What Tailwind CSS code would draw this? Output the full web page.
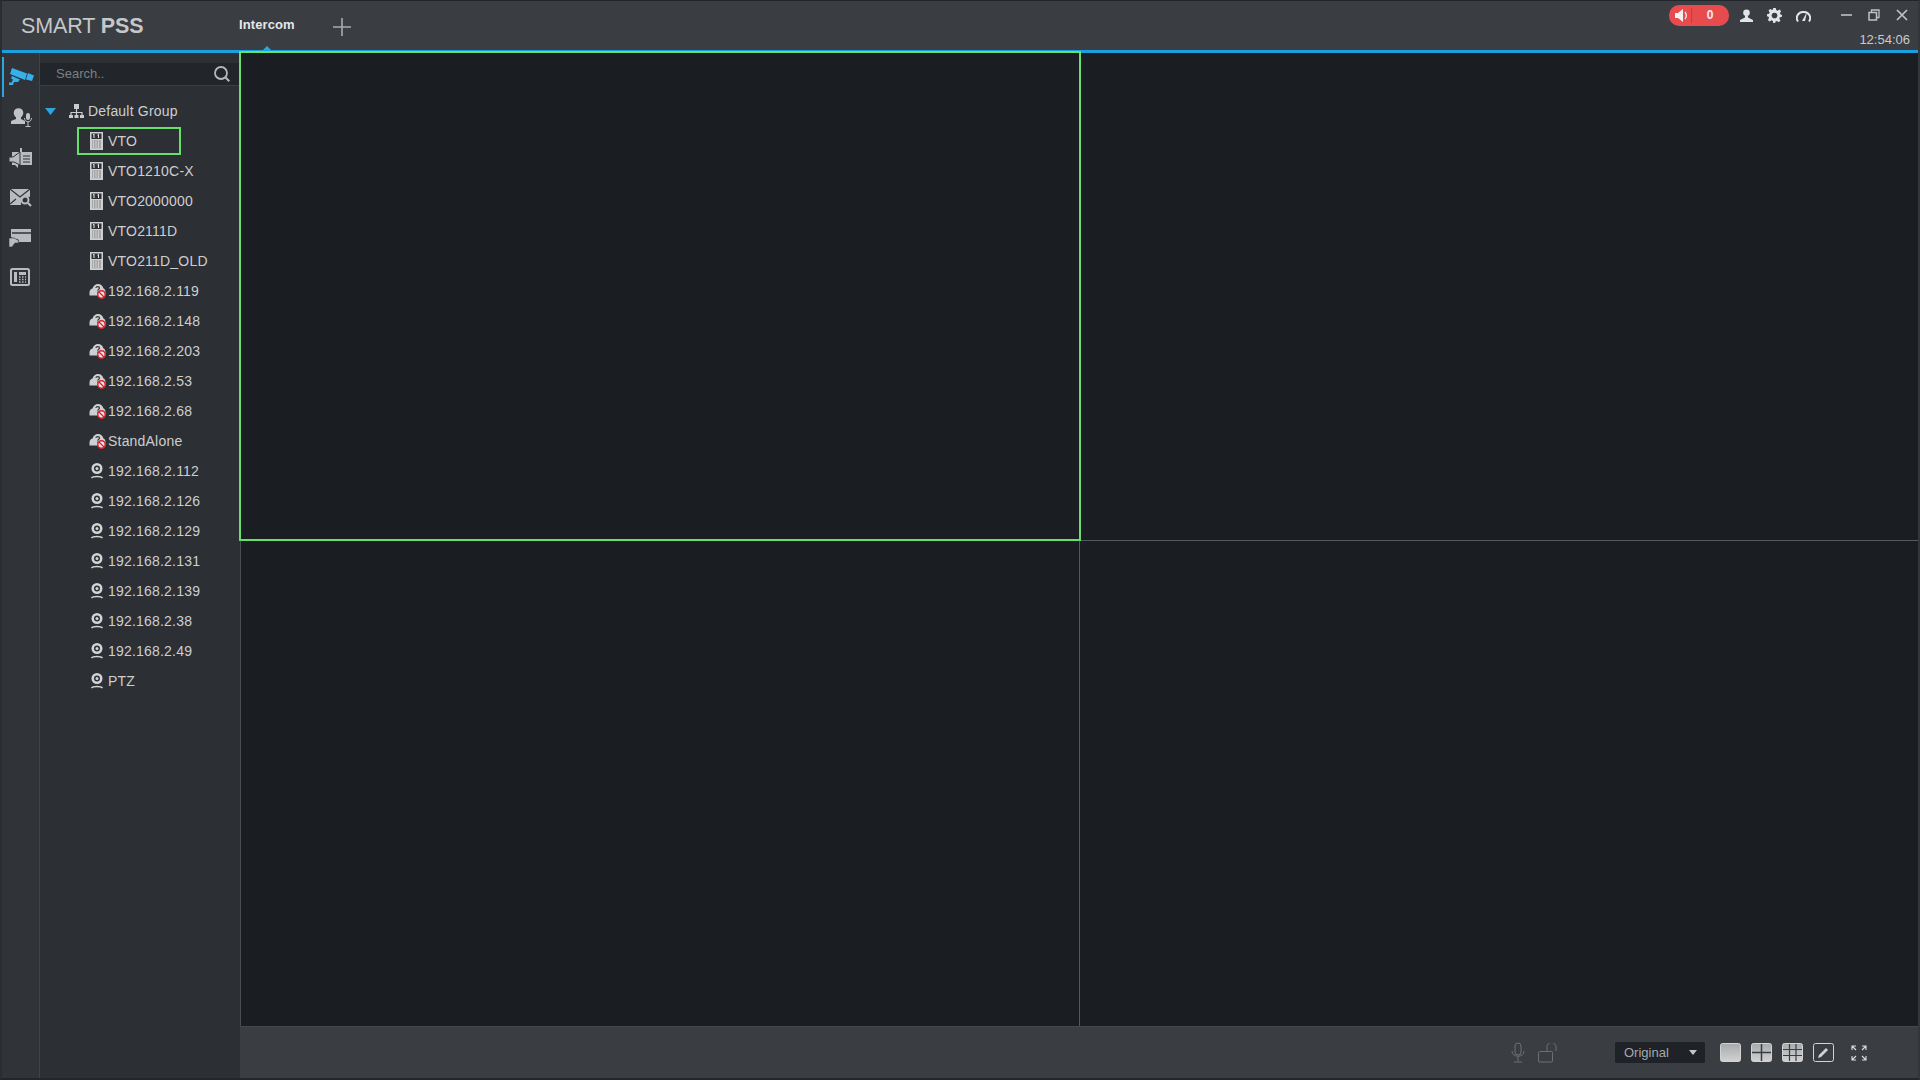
<!DOCTYPE html>
<html><head><meta charset="utf-8"><title>SmartPSS</title>
<script src="https://cdn.jsdelivr.net/npm/@tailwindcss/browser@4"></script></head>
<body class="m-0 bg-[#1b1e22]">
<svg width="0" height="0" class="absolute">
<defs>
<linearGradient id="tile" x1="0" y1="0" x2="0" y2="1"><stop offset="0" stop-color="#a8a9ab"/><stop offset="1" stop-color="#d2d2d3"/></linearGradient>
<symbol id="vto" viewBox="0 0 13 18"><rect width="13" height="18" fill="#cfd0d2"/><rect x="1.500" y="1.500" width="10" height="5.500" fill="#2f3236"/><path d="M3 3l1-.8V6M7.500 3l1-.8V6" stroke="#e8e8e8" stroke-width="1" fill="none"/><rect x="2" y="8.500" width="9" height="8" fill="#85878a"/><path d="M2 10h9M2 12h9M2 14h9M2 16h9M3.500 8.500v8M6 8.500v8M8.500 8.500v8" stroke="#d5d6d8" stroke-width=".8"/></symbol>
<symbol id="off" viewBox="0 0 17 16"><path d="M.5 12.500V9.500C.5 7.500 1.500 6 3.500 5.500 4.500 2.500 6.500 1 9 1c2.800 0 4.800 1.800 5.300 4.300 1.400.6 2.200 2 2.200 4v3.200z" fill="#cfd0d2"/><path d="M6.800 4.800c.4-1.700 3.700-1.700 3.700.2 0 1.300-1.700 1.300-1.700 2.700M8.800 8.500v1.200" stroke="#33363a" stroke-width="1.200" fill="none"/><circle cx="12.500" cy="11.500" r="3.700" fill="#efe6e6" stroke="#d8232f" stroke-width="1.500"/><path d="M10 9l5 5" stroke="#d8232f" stroke-width="1.300"/></symbol>
<symbol id="cam" viewBox="0 0 14 18"><circle cx="7" cy="6.500" r="5.500" fill="#d3d4d6"/><circle cx="7" cy="6.500" r="3" fill="#2c2f33"/><circle cx="7" cy="6.500" r="1.500" fill="#d3d4d6"/><path d="M1.500 16c1.500-2 9.500-2 11 0" stroke="#d3d4d6" stroke-width="1.300" fill="none"/></symbol>
</defs>
</svg>
<div class="w-[1920px] h-[1080px] flex flex-col overflow-hidden bg-[#1b1e22] border-t border-l-2 border-b-2 border-r-2 border-t-[#22252a] border-l-[#2a2d31] border-b-[#22252a] border-r-[#33363a] font-['Liberation_Sans',Arial,sans-serif] text-[#d2d3d5]">

<!-- header -->
<header class="h-[49px] shrink-0 flex items-start bg-[#3a3d42] relative">
  <div class="w-[19px] shrink-0"></div>
  <div class="w-[218px] shrink-0 pt-[13px] text-[21.500px] leading-6 text-[#c5c7c9] whitespace-nowrap tracking-[-0.1px]">SMART <span class="font-bold">PSS</span></div>
  <div class="w-[94px] shrink-0 pt-[16px] text-[13px] tracking-[0.1px] leading-4 font-bold text-[#e6e7e8] relative">Intercom
    <div class="absolute left-[24px] top-[45px] w-0 h-0 border-x-[4px] border-x-transparent border-b-[4px] border-b-[#2ba6df]"></div>
  </div>
  <svg class="mt-[17px]" width="18" height="18" viewBox="0 0 18 18"><path d="M9 0v18M0 9h18" stroke="#a9abae" stroke-width="1.600"/></svg>
  <div class="flex-1"></div>
  <div class="flex flex-col items-end shrink-0">
    <div class="flex items-center pt-[3px] h-[25px] pr-[1px]">
      <div class="w-[60px] h-[21px] rounded-[10px] bg-[#e84b4e] flex items-center">
        <svg class="ml-[6px]" width="14" height="13" viewBox="0 0 14 13"><path d="M0 4h3l5-4v13l-5-4H0z" fill="#f6f1f1"/><path d="M10 3c1.500 2 1.500 5 0 7" stroke="#f6f1f1" stroke-width="1.300" fill="none"/></svg>
        <div class="w-px h-[15px] bg-[#c93a3d] ml-[2px]"></div>
        <div class="flex-1 text-center pr-[1px] text-[12px] font-bold text-[#f8eeee]">0</div>
      </div>
      <svg class="ml-[11px]" width="13" height="13" viewBox="0 0 13 13"><circle cx="6.500" cy="3.800" r="3.300" fill="#e3e4e5"/><path d="M5 6.500h3v2l5 2.500v2H0v-2l5-2.500z" fill="#e3e4e5"/></svg>
      <svg class="ml-[14px]" width="15" height="15" viewBox="0 0 24 24"><path fill="#e3e4e5" d="M10 0h4l.7 3.300 2.300 1L20 2.400 22.600 5l-1.900 2.900 1 2.300L24 11v3l-3.300.7-1 2.300 1.900 2.900-2.700 2.700-2.900-1.900-2.300 1L13 24h-3l-.7-3.300-2.300-1-2.900 1.900L1.400 19l1.900-2.900-1-2.300L0 13v-3l3.300-.7 1-2.300L2.400 4 5 1.400l2.900 1.900 1.400-.9z"/><circle cx="12" cy="12" r="4.500" fill="#3a3d42"/></svg>
      <svg class="ml-[14px]" width="15" height="13" viewBox="0 0 15 13"><path d="M2 12.500A6 6 0 0 1 7.500 3a6 6 0 0 1 5.500 9.500" stroke="#e3e4e5" stroke-width="2" fill="none"/><path d="M6 12l5-9-2 9z" fill="#e3e4e5"/></svg>
      <svg class="ml-[29px]" width="13" height="13" viewBox="0 0 13 13"><path d="M1 6h11" stroke="#c0c2c4" stroke-width="1.600"/></svg>
      <svg class="ml-[15px]" width="12" height="12" viewBox="0 0 12 12"><path d="M3.500 3V1H11v7.500H9" stroke="#c0c2c4" stroke-width="1.300" fill="none"/><rect x="1" y="3.500" width="7.500" height="7.500" stroke="#c0c2c4" stroke-width="1.500" fill="none"/></svg>
      <svg class="ml-[16px] mr-[9px]" width="12" height="12" viewBox="0 0 12 12"><path d="M1 1l10 10M11 1L1 11" stroke="#c0c2c4" stroke-width="1.700"/></svg>
    </div>
    <div class="pt-[6px] pr-[8px] text-[13px] leading-4 text-[#c9cbcd]">12:54:06</div>
  </div>
</header>
<div class="h-[3px] shrink-0 bg-[#1a9fe0]"></div>

<div class="flex-1 flex min-h-0">
  <!-- rail -->
  <nav class="w-[38px] shrink-0 bg-[#303337] border-r border-[#3f4246] flex flex-col items-center relative pt-[14px]">
    <div class="absolute left-0 top-[4px] w-[2px] h-[40px] bg-[#2ba6df]"></div>
    <svg class="ml-[2px]" width="25" height="20" viewBox="0 0 25 20"><path d="M3 1l15 5.500-2 6.500L1 7z" fill="#35b0ea"/><path d="M19 6l6 2.500-2 5.500-6-1.500z" fill="#35b0ea"/><path d="M3 9l8 3.500-2 2.500H5l-1 3H0v-2.500h2.500l1.500-3-2-1z" fill="#35b0ea"/></svg>
    <svg class="mt-[21px] ml-[2px]" width="22" height="20" viewBox="0 0 22 20"><circle cx="7.500" cy="5" r="4.800" fill="#c0c2c5"/><path d="M5 9h5v2l4 2v3H0v-3l5-2z" fill="#c0c2c5"/><rect x="15" y="5" width="4" height="7" rx="2" fill="#c0c2c5"/><path d="M13.500 10c0 5 7 5 7 0M17 14v4M14.500 18.500h5" stroke="#c0c2c5" stroke-width="1" fill="none"/></svg>
    <svg class="mt-[20px]" width="23" height="21" viewBox="0 0 23 21"><path d="M3 4h20v13H9v3l-3-3H3z" fill="#b9bbbe"/><path d="M0 9h4l7-5v13l-6-3H0z" fill="#b9bbbe" stroke="#303337"/><path d="M14 8h7M14 11h7M14 14h7" stroke="#303337" stroke-width="1.200"/><path d="M12 0v4" stroke="#b9bbbe" stroke-width="2"/></svg>
    <svg class="mt-[19px]" width="22" height="19" viewBox="0 0 22 19"><path d="M0 1h20v8a7 7 0 0 0-9 8H0z" fill="#b9bbbe"/><path d="M0 1l10 8 10-8M0 16l6-5" stroke="#303337" stroke-width="1.200" fill="none"/><circle cx="15" cy="12" r="3.500" stroke="#b9bbbe" stroke-width="2" fill="none"/><path d="M18 15l3 3" stroke="#b9bbbe" stroke-width="2.200"/></svg>
    <svg class="mt-[22px] -ml-[1px]" width="22" height="18" viewBox="0 0 22 18"><path d="M2 0h20v13H10l-1-3H5L2 8z" fill="#b9bbbe"/><path d="M3 4h19" stroke="#303337" stroke-width="1.500"/><path d="M0 9h5l4 2 1 3-4 0-3 4H0z" fill="#b9bbbe" stroke="#303337" stroke-width=".6"/></svg>
    <svg class="mt-[21px] -ml-[1px]" width="20" height="18" viewBox="0 0 20 18"><rect x="1" y="1" width="18" height="16" rx="1.500" stroke="#b9bbbe" stroke-width="2" fill="none"/><rect x="4" y="4" width="3" height="10" fill="#b9bbbe"/><rect x="9" y="4" width="7" height="3" fill="#b9bbbe"/><path d="M9 9h1.500M12 9h1.500M15 9h1M9 11.500h1.500M12 11.500h1.500M15 11.500h1M9 14h1.500M12 14h1.500M15 14h1" stroke="#b9bbbe" stroke-width="1.400"/></svg>
  </nav>

  <!-- tree panel -->
  <aside class="w-[200px] shrink-0 bg-[#2c2f33] flex flex-col text-[14px] tracking-[0.2px] leading-5 text-[#cdced0]">
    <div class="mt-[10px] mr-[1px] h-[23px] shrink-0 bg-[#222529] border-b border-[#3a3d41] flex items-center pl-[16px] pr-[8px] justify-between">
      <span class="text-[13px] tracking-normal text-[#7d8083]">Search..</span>
      <svg width="17" height="17" viewBox="0 0 17 17"><circle cx="7" cy="7" r="6" stroke="#b5b7b9" stroke-width="1.800" fill="none"/><path d="M11.300 11.300l4 4" stroke="#b5b7b9" stroke-width="2"/></svg>
    </div>
    <ul class="pt-[15px]">
      <li class="h-[20px] flex items-center pl-[5px]">
        <svg width="11" height="7" viewBox="0 0 11 7"><path d="M0 0h11L5.500 7z" fill="#2ba6df"/></svg>
        <svg class="ml-[13px]" width="15" height="14" viewBox="0 0 15 14"><rect x="5" y="0" width="5" height="5" fill="#c9cbcd"/><path d="M7.500 5v3M2 12V8.500h11V12M7.500 8v4" stroke="#c9cbcd" stroke-width="1.200" fill="none"/><rect x="0" y="11" width="4" height="3" fill="#c9cbcd"/><rect x="5.500" y="11" width="4" height="3" fill="#c9cbcd"/><rect x="11" y="11" width="4" height="3" fill="#c9cbcd"/></svg>
        <span class="ml-[4px]">Default Group</span>
      </li>
      <li class="h-[28px] mt-[6px] ml-[37px] w-[104px] border-2 border-[#66df6d] flex items-center pl-[11px]"><svg width="13" height="18"><use href="#vto"/></svg><span class="ml-[5px]">VTO</span></li>
      <li class="h-[30px] mt-[1px] ml-[50px] flex items-center"><svg width="13" height="18"><use href="#vto"/></svg><span class="ml-[5px]">VTO1210C-X</span></li>
      <li class="h-[30px] ml-[50px] flex items-center"><svg width="13" height="18"><use href="#vto"/></svg><span class="ml-[5px]">VTO2000000</span></li>
      <li class="h-[30px] ml-[50px] flex items-center"><svg width="13" height="18"><use href="#vto"/></svg><span class="ml-[5px]">VTO2111D</span></li>
      <li class="h-[30px] ml-[50px] flex items-center"><svg width="13" height="18"><use href="#vto"/></svg><span class="ml-[5px]">VTO211D_OLD</span></li>
      <li class="h-[30px] ml-[49px] flex items-center"><svg width="17" height="16"><use href="#off"/></svg><span class="ml-[2px]">192.168.2.119</span></li>
      <li class="h-[30px] ml-[49px] flex items-center"><svg width="17" height="16"><use href="#off"/></svg><span class="ml-[2px]">192.168.2.148</span></li>
      <li class="h-[30px] ml-[49px] flex items-center"><svg width="17" height="16"><use href="#off"/></svg><span class="ml-[2px]">192.168.2.203</span></li>
      <li class="h-[30px] ml-[49px] flex items-center"><svg width="17" height="16"><use href="#off"/></svg><span class="ml-[2px]">192.168.2.53</span></li>
      <li class="h-[30px] ml-[49px] flex items-center"><svg width="17" height="16"><use href="#off"/></svg><span class="ml-[2px]">192.168.2.68</span></li>
      <li class="h-[30px] ml-[49px] flex items-center"><svg width="17" height="16"><use href="#off"/></svg><span class="ml-[2px]">StandAlone</span></li>
      <li class="h-[30px] ml-[50px] flex items-center"><svg width="14" height="18"><use href="#cam"/></svg><span class="ml-[4px]">192.168.2.112</span></li>
      <li class="h-[30px] ml-[50px] flex items-center"><svg width="14" height="18"><use href="#cam"/></svg><span class="ml-[4px]">192.168.2.126</span></li>
      <li class="h-[30px] ml-[50px] flex items-center"><svg width="14" height="18"><use href="#cam"/></svg><span class="ml-[4px]">192.168.2.129</span></li>
      <li class="h-[30px] ml-[50px] flex items-center"><svg width="14" height="18"><use href="#cam"/></svg><span class="ml-[4px]">192.168.2.131</span></li>
      <li class="h-[30px] ml-[50px] flex items-center"><svg width="14" height="18"><use href="#cam"/></svg><span class="ml-[4px]">192.168.2.139</span></li>
      <li class="h-[30px] ml-[50px] flex items-center"><svg width="14" height="18"><use href="#cam"/></svg><span class="ml-[4px]">192.168.2.38</span></li>
      <li class="h-[30px] ml-[50px] flex items-center"><svg width="14" height="18"><use href="#cam"/></svg><span class="ml-[4px]">192.168.2.49</span></li>
      <li class="h-[30px] ml-[50px] flex items-center"><svg width="14" height="18"><use href="#cam"/></svg><span class="ml-[4px]">PTZ</span></li>
    </ul>
  </aside>

  <!-- main -->
  <main class="flex-1 min-w-0 flex flex-col">
    <div class="flex-1 grid grid-cols-[839px_1fr] grid-rows-[488px_1fr] bg-[#1a1d21] border-l border-[#4a4d51]">
      <div class="border-r border-b border-[#55585c] relative"><div class="absolute -top-[2px] -left-[2px] -right-[2px] -bottom-px border-2 border-[#66df6d]"></div></div>
      <div class="border-b border-[#55585c]"></div>
      <div class="border-r border-[#55585c]"></div>
      <div></div>
    </div>
    <div class="h-[52px] shrink-0 bg-[#3a3d42] border-t border-[#45484c] flex items-center justify-end pr-[51px]">
      <svg width="14" height="21" viewBox="0 0 14 21"><rect x="4" y="1" width="6" height="12" rx="3" stroke="#6d7073" fill="none"/><path d="M1 9c0 7 12 7 12 0M7 15v4M3 20h8" stroke="#6d7073" fill="none"/></svg>
      <svg class="ml-[13px]" width="19" height="20" viewBox="0 0 19 20"><rect x=".5" y="8.500" width="14" height="10.500" rx="1" stroke="#6d7073" fill="none"/><path d="M9 8V4a4.500 4.500 0 0 1 9 0v4" stroke="#6d7073" fill="none"/></svg>
      <div class="ml-[58px] w-[90px] h-[21px] bg-[#1f2226] rounded-[1px] flex items-center justify-between pl-[9px] pr-[8px] text-[13px] text-[#a6a8ab]">Original<svg width="8" height="5" viewBox="0 0 8 5"><path d="M0 0h8L4 5z" fill="#c5c7c9"/></svg></div>
      <svg class="ml-[15px]" width="21" height="19" viewBox="0 0 21 19"><rect x=".5" y=".5" width="20" height="18" rx="2" fill="url(#tile)" stroke="#d2d3d5"/></svg>
      <svg class="ml-[10px]" width="21" height="19" viewBox="0 0 21 19"><rect x=".5" y=".5" width="20" height="18" rx="2" fill="url(#tile)" stroke="#d2d3d5"/><path d="M1 9.500h19M10.500 1v17" stroke="#3a3d42" stroke-width="1.500"/></svg>
      <svg class="ml-[10px]" width="21" height="19" viewBox="0 0 21 19"><rect x=".5" y=".5" width="20" height="18" rx="2" fill="url(#tile)" stroke="#d2d3d5"/><path d="M1 6.500h19M1 12.500h19M7.500 1v17M14 1v17" stroke="#3a3d42" stroke-width="1.200"/></svg>
      <svg class="ml-[10px]" width="21" height="19" viewBox="0 0 21 19"><rect x=".5" y=".5" width="20" height="18" rx="2" fill="none" stroke="#d2d3d5"/><path d="M5 15l1-3 7-7 2 2-7 7z" fill="#d2d3d5"/></svg>
      <svg class="ml-[17px]" width="16" height="16" viewBox="0 0 16 16"><path d="M1 5V1h4M11 1h4v4M15 11v4h-4M5 15H1v-4M1 1l4 4M15 1l-4 4M15 15l-4-4M1 15l4-4" stroke="#dcdde0" stroke-width="1.100" fill="none"/></svg>
    </div>
  </main>
</div>
</div>
</body></html>
